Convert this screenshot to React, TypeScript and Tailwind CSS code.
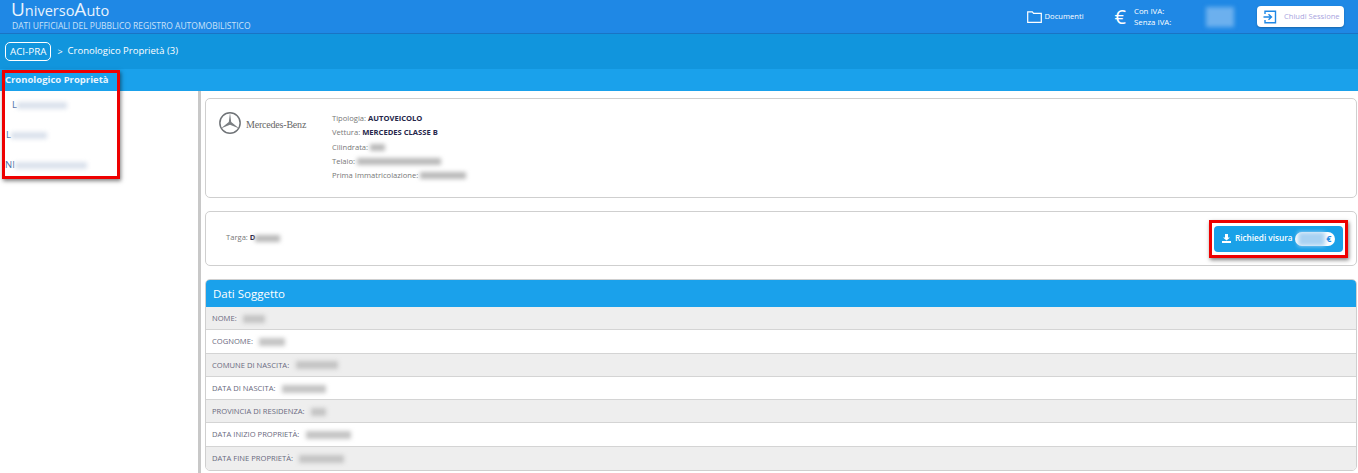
import React from "react";

const Blur = ({ w, h = "h-[7px]", c = "bg-[#b9b9b9]" }: { w: string; h?: string; c?: string }) => (
  <span className={`inline-block ${w} ${h} ${c} blur-[2px] align-middle`} />
);

const rows: [string, string, string][] = [
  ["NOME:", "w-[22px]", "bg-[#eeeeee]"],
  ["COGNOME:", "w-[26px]", "bg-white"],
  ["COMUNE DI NASCITA:", "w-[42px]", "bg-[#eeeeee]"],
  ["DATA DI NASCITA:", "w-[44px]", "bg-white"],
  ["PROVINCIA DI RESIDENZA:", "w-[15px]", "bg-[#eeeeee]"],
  ["DATA INIZIO PROPRIETÀ:", "w-[45px]", "bg-white"],
  ["DATA FINE PROPRIETÀ:", "w-[45px]", "bg-[#eeeeee]"],
];

const Star = () => (
  <svg width="24" height="24" viewBox="0 0 26 26" fill="none" className="shrink-0">
    <circle cx="13" cy="13" r="11" stroke="#6f7377" strokeWidth="1.6" />
    <path d="M13 2 14.3 12 23 19 13 15 3 19 11.7 12Z" fill="#7b7f83" />
  </svg>
);

export default function App() {
  return (
    <div className="relative w-[1358px] h-[473px] overflow-hidden bg-white font-['Open_Sans',sans-serif] text-[#555]">
      <header className="h-[34px] bg-[#1f88e5] border-b border-[#1a74c4] flex items-center text-white shadow-[0_1px_2px_rgba(0,0,0,0.2)]">
        <div className="pl-[11px] w-[400px] -mt-[1px]">
          <div className="flex items-baseline text-[14.5px] leading-[17px] h-[17px] text-[#e8f3fd]">
            <span className="text-[19px] leading-[17px]">U</span>
            <span>niverso</span>
            <span className="text-[19px] leading-[17px]">A</span>
            <span>uto</span>
          </div>
          <div className="pl-[1px] text-[8.5px] leading-[10px] text-[#cbe3f9] font-medium whitespace-nowrap mt-[3px]">DATI UFFICIALI DEL PUBBLICO REGISTRO AUTOMOBILISTICO</div>
        </div>
        <div className="ml-auto flex items-center">
          <svg width="15" height="12" viewBox="0 0 15 12" fill="none" stroke="white" strokeWidth="1.2" className="mr-[3px]">
            <path d="M.7 11.3V.9h4.6l1.3 1.5h7.7v8.9z" />
          </svg>
          <span className="text-[7.6px] mr-[31px]">Documenti</span>
          <span className="text-[20px] leading-none mr-[8px]">€</span>
          <div className="text-[7.8px] leading-[11px] w-[72px]">
            <div>Con IVA:</div>
            <div>Senza IVA:</div>
          </div>
          <div className="w-[28px] h-[20px] bg-[#6cb0ee] blur-[2px] mr-[23px]" />
          <button className="w-[87px] h-[21px] mr-[14px] bg-white rounded-[4px] flex items-center shadow-[0_1px_2px_rgba(0,0,0,0.25)]">
            <svg width="14" height="14" viewBox="0 0 14 14" fill="none" stroke="#1f88e5" strokeWidth="1.4" className="ml-[6px] mr-[7px]">
              <path d="M2 4V1.2h10.5v11.6H2V10M.5 7H8M5.5 4.2 8.5 7l-3 2.8" />
            </svg>
            <span className="text-[7.6px] text-[#a8a4e0] whitespace-nowrap">Chiudi Sessione</span>
          </button>
        </div>
      </header>

      <div className="h-[35px] bg-[#1195dd] flex items-center pl-[5px] text-white">
        <span className="h-[19px] px-[4px] border border-white rounded-[5px] text-[9.8px] leading-[17px]">ACI-PRA</span>
        <span className="text-[9px] ml-[6px]">&gt;</span>
        <span className="text-[9.5px] ml-[5px]">Cronologico Proprietà (3)</span>
      </div>

      <div className="h-[22px] bg-[#1aa1eb] flex items-center pl-[5px] text-[9.5px] font-bold text-[#e6f4fd]">Cronologico Proprietà</div>

      <div className="flex h-[382px]">
        <aside className="w-[198px] shrink-0 bg-white text-[9.5px] text-[#4a6fa5]">
          <div className="pl-[12px] h-[30px] mt-[-1px] flex items-center">L<Blur w="w-[50px]" c="bg-[#dbe2ec]" /></div>
          <div className="pl-[6px] h-[30px] flex items-center">L<Blur w="w-[36px]" c="bg-[#dbe2ec]" /></div>
          <div className="pl-[5px] h-[30px] flex items-center">NI<Blur w="w-[72px]" c="bg-[#dbe2ec]" /></div>
        </aside>
        <div className="w-[3px] shrink-0 bg-[#c8c8c8]" />
        <main className="flex-1 min-w-0 pl-[4px] pr-[1px] pt-[7px] text-[7.6px]">
          <section className="h-[100px] border border-[#cfcfcf] rounded-[5px] flex pl-[12px] pt-[12px]">
            <Star />
            <span className="font-['Liberation_Serif',serif] text-[10px] text-[#666] tracking-[-0.2px] ml-[4px] mt-[6px] w-[86px] whitespace-nowrap">Mercedes-Benz</span>
            <div className="leading-[14.25px] text-[#777]">
              <div>Tipologia: <b className="text-[#26264a]">AUTOVEICOLO</b></div>
              <div>Vettura: <b className="text-[#26264a]">MERCEDES CLASSE B</b></div>
              <div>Cilindrata: <Blur w="w-[15px]" /></div>
              <div>Telaio: <Blur w="w-[84px]" /></div>
              <div>Prima Immatricolazione: <Blur w="w-[46px]" /></div>
            </div>
          </section>

          <section className="mt-[13px] h-[55px] border border-[#cfcfcf] rounded-[5px] flex items-center pl-[20px] pr-[13px]">
            <span className="text-[#777] -mt-[1px]">Targa: <b className="text-[#26264a]">D</b><Blur w="w-[25px]" /></span>
            <button className="ml-auto w-[129px] h-[26px] bg-[#1aa1e8] rounded-[4px] flex items-center pl-[8px] text-white text-[8.2px] font-semibold">
              <svg width="9" height="9" viewBox="0 0 9 9" fill="white" className="mr-[4px]">
                <path d="M3 0h3v3.4h2L4.5 6.6 1 3.4h2zM0 7h9v2H0z" />
              </svg>
              <span className="whitespace-nowrap">Richiedi visura</span>
              <span className="ml-[3px] w-[40px] h-[14px] bg-white rounded-full flex items-center justify-end pr-[4px] text-[#1f88e5] text-[9px] font-bold relative">
                <span className="absolute left-[3px] top-0 w-[27px] h-[14px] bg-[#a9d2f2] blur-[2px]" />€
              </span>
            </button>
          </section>

          <section className="mt-[13px] border border-[#cfcfcf] rounded-[5px] overflow-hidden">
            <div className="h-[27px] bg-[#1aa1eb] text-white text-[11.5px] flex items-center pl-[7px]">Dati Soggetto</div>
            {rows.map(([label, w, bg]) => (
              <div key={label} className={`h-[23.3px] pt-[1px] ${bg} border-b border-[#d4d4d4] last:border-b-0 flex items-center pl-[6px] gap-[6.5px] text-[#6a6a80]`}>
                <span>{label}</span>
                <Blur w={w} h="h-[8px]" c="bg-[#c4c4c4]" />
              </div>
            ))}
          </section>
        </main>
      </div>

      <div className="absolute left-[2px] top-[70px] w-[118px] h-[109px] border-[3px] border-[#ee0000] shadow-[1px_2px_4px_rgba(0,0,0,0.5)]" />
      <div className="absolute left-[1209px] top-[220px] w-[139px] h-[38px] border-[3px] border-[#ee0000] shadow-[1px_2px_4px_rgba(0,0,0,0.5)]" />
    </div>
  );
}
